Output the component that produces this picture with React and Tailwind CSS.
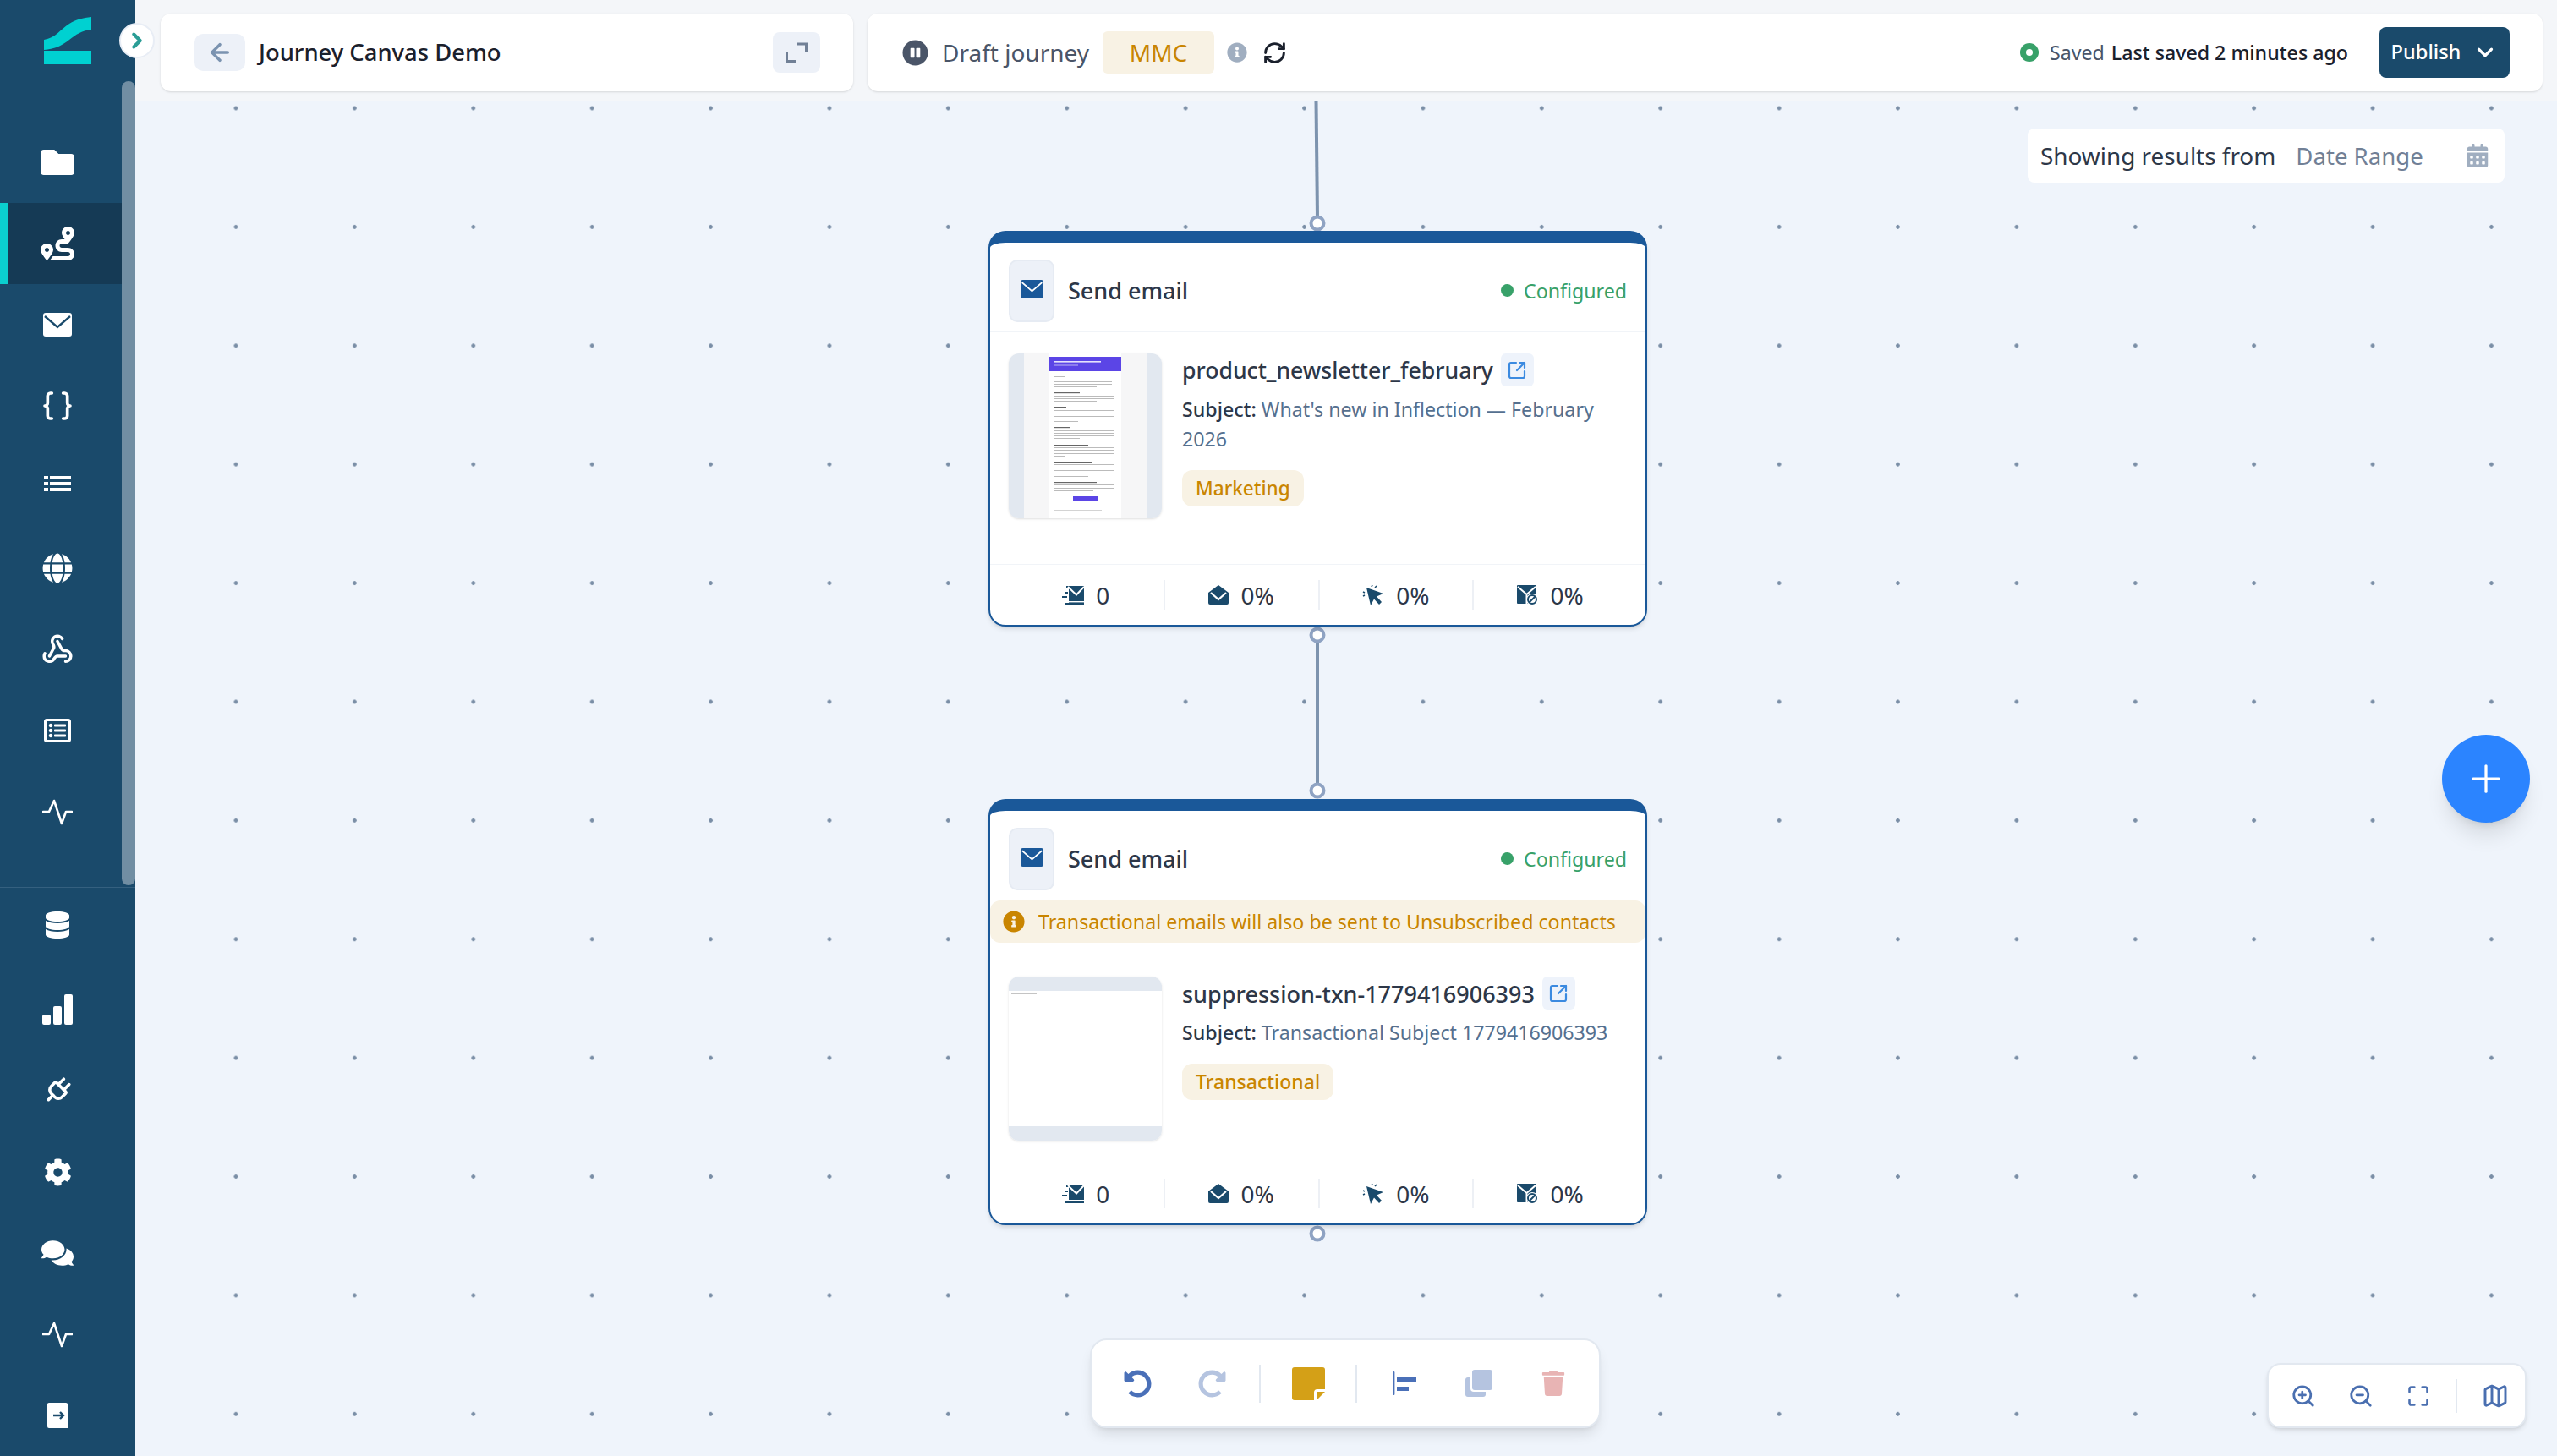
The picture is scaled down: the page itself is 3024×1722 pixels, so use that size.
import {
  ArrowLeft,
  Braces,
  ChevronDown,
  ChevronRight,
  Map as MapIcon,
  Maximize,
  Plug,
  Plus,
  RefreshCw,
  SquareArrowOutUpRight,
  Webhook,
  ZoomIn,
  ZoomOut,
} from 'lucide-react';
import {
  FaCalendarAlt,
  FaCog,
  FaComments,
  FaDatabase,
  FaFolder,
  FaGlobe,
  FaInfoCircle,
  FaPauseCircle,
  FaRedoAlt,
  FaRegListAlt,
  FaRoute,
  FaTrash,
  FaUndoAlt,
} from 'react-icons/fa';

// ─── Small drawn icons ───────────────────────────────────────────────────────

function Logo() {
  return (
    <svg width="56" height="56" viewBox="0 0 56 56" fill="#00d1d1">
      <path d="M0 27C14 25 20 14 30 8C38 3 46 1 56 0V15C44 16 38 21 30 27C20 35 12 38 0 39Z" />
      <rect x="0" y="40" width="56" height="16" />
    </svg>
  );
}

function Envelope({ color, width = 34, height = 28 }) {
  return (
    <svg width={width} height={height} viewBox="0 0 34 28">
      <rect width="34" height="28" rx="3" fill={color} />
      <path d="M2 4L17 17L32 4" fill="none" stroke={color === '#ffffff' ? '#1a4a6b' : '#ffffff'} strokeWidth="2.4" />
    </svg>
  );
}

function ListIcon() {
  return (
    <svg width="32" height="18" viewBox="0 0 32 18" fill="#ffffff" className="-translate-y-1">
      <rect x="0" y="0" width="5" height="4" />
      <rect x="7" y="0" width="25" height="4" />
      <rect x="0" y="7" width="5" height="4" />
      <rect x="7" y="7" width="25" height="4" />
      <rect x="0" y="14" width="5" height="4" />
      <rect x="7" y="14" width="25" height="4" />
    </svg>
  );
}

function Pulse() {
  return (
    <svg width="36" height="33" viewBox="0 0 36 33" fill="none" stroke="#ffffff" strokeWidth="2.6" strokeLinecap="round" strokeLinejoin="round">
      <path d="M1 16H8L14 3L23 30L28 16H35" />
    </svg>
  );
}

function Bars() {
  return (
    <svg width="36" height="36" viewBox="0 0 36 36" fill="#ffffff">
      <rect x="0" y="24" width="10" height="12" rx="2" />
      <rect x="13" y="14" width="10" height="22" rx="2" />
      <rect x="26" y="0" width="10" height="36" rx="2" />
    </svg>
  );
}

function ExitBox() {
  return (
    <svg width="24" height="30" viewBox="0 0 24 30">
      <path d="M2 0H22a2 2 0 012 2V30H2a2 2 0 01-2-2V2a2 2 0 012-2z" fill="#ffffff" />
      <path d="M7 15H19M15 11L19 15L15 19" fill="none" stroke="#1a4a6b" strokeWidth="2.4" />
    </svg>
  );
}

function SentIcon() {
  return (
    <svg width="26" height="22" viewBox="0 0 26 22">
      <path d="M5 0H26V22H3V20H8V3H5Z" fill="#1a4a6b" />
      <path d="M7 1L17 10.5L26 1" fill="none" stroke="#ffffff" strokeWidth="2" />
      <path d="M3 8H7M0 13H6" stroke="#1a4a6b" strokeWidth="2" />
      <rect x="8" y="18" width="18" height="1.4" fill="#ffffff" />
    </svg>
  );
}

function OpenIcon() {
  return (
    <svg width="24" height="23" viewBox="0 0 24 23">
      <path d="M0 9L12 0L24 9V21a2 2 0 01-2 2H2a2 2 0 01-2-2Z" fill="#1a4a6b" />
      <path d="M3 9L12 17L21 9" fill="none" stroke="#ffffff" strokeWidth="2.2" />
    </svg>
  );
}

function ClickIcon() {
  return (
    <svg width="26" height="24" viewBox="0 0 26 24">
      <path d="M5 3L25 10L17 13.5L23 20L20 23L14 16.5L10 24Z" fill="#1a4a6b" />
      <path d="M11 2L12 0M15 3L17 1M1 8L3 9M1 13L3 12" stroke="#1a4a6b" strokeWidth="1.6" />
    </svg>
  );
}

function UnsubIcon() {
  return (
    <svg width="25" height="24" viewBox="0 0 25 24">
      <rect width="23" height="22" rx="1" fill="#1a4a6b" />
      <path d="M1 2L11.5 11L22 2M11.5 11V22" fill="none" stroke="#ffffff" strokeWidth="2" />
      <circle cx="18" cy="17" r="7" fill="#ffffff" />
      <circle cx="18" cy="17" r="5" fill="none" stroke="#1a4a6b" strokeWidth="2" />
      <path d="M14.5 20.5L21.5 13.5" stroke="#1a4a6b" strokeWidth="2" />
    </svg>
  );
}

function StickyIcon() {
  return (
    <svg width="39" height="39" viewBox="0 0 39 39" fill="#d4a017">
      <path d="M3 0H36a3 3 0 013 3V26H30a4 4 0 00-4 4V39H3a3 3 0 01-3-3V3a3 3 0 013-3z" />
      <path d="M29 29H39L29 39Z" />
    </svg>
  );
}

function AlignIcon() {
  return (
    <svg width="28" height="28" viewBox="0 0 28 28" fill="#4a70b8">
      <rect x="0" y="0" width="2.4" height="28" rx="1" />
      <rect x="5" y="7" width="23" height="5" />
      <rect x="5" y="18" width="14" height="5" />
    </svg>
  );
}

function CopyIcon() {
  return (
    <svg width="32" height="32" viewBox="0 0 32 32" fill="#b5c4e0">
      <rect x="0" y="9" width="24" height="23" rx="3" />
      <rect x="6" y="-2" width="28" height="28" rx="4" fill="#ffffff" />
      <rect x="8" y="0" width="24" height="24" rx="3" />
    </svg>
  );
}

function ExpandIcon() {
  return (
    <svg width="26" height="24" viewBox="0 0 26 24" fill="none" stroke="#718096" strokeWidth="3">
      <path d="M14 2H24.5V12M1.5 12V22.5H12" />
    </svg>
  );
}

// ─── Email thumbnail (drawn preview of the template) ─────────────────────────

const THUMB_LINES = [
  [27, 12], [33, 68], [36, 68], [39, 50],
  [46, 30, true], [50, 70], [53, 70], [56, 50],
  [63, 14, true], [67, 70], [70, 70], [74, 70], [77, 70], [80, 28],
  [87, 18, true], [91, 70], [94, 70], [97, 70], [100, 30],
  [108, 40, true], [111, 70], [114, 70], [118, 70], [121, 12],
  [128, 44, true], [131, 70], [135, 70], [138, 70], [141, 70], [145, 40],
  [152, 50, true], [155, 70], [159, 70], [162, 46],
];

function NewsletterThumb() {
  return (
    <svg width="181" height="195" viewBox="0 0 181 195" className="block">
      <rect width="181" height="195" fill="#e2e8f0" />
      <rect x="18" width="146" height="195" fill="#f6f6f7" />
      <rect x="48" y="0" width="85" height="195" fill="#ffffff" />
      <rect x="48" y="4" width="85" height="17" fill="#5b45e6" />
      <rect x="54" y="9" width="55" height="1.6" fill="#ffffff" opacity="0.85" />
      <rect x="54" y="13.5" width="28" height="1" fill="#ffffff" opacity="0.6" />
      {THUMB_LINES.map(([y, w, bold], i) => (
        <rect key={i} x="54" y={y} width={w} height={bold ? 1.2 : 0.9} fill={bold ? '#666666' : '#b4b4b4'} />
      ))}
      <rect x="76" y="169" width="29" height="6" fill="#5b45e6" />
      <rect x="54" y="185" width="56" height="0.8" fill="#c8c8c8" />
    </svg>
  );
}

function BlankThumb() {
  return (
    <div className="flex h-[194px] w-[181px] flex-col bg-white">
      <div className="h-[17px] bg-[#e2e8f0]" />
      <div className="flex-1 pl-[3px] pt-[2px]">
        <div className="h-[2px] w-[30px] bg-[#c4c4c4]" />
      </div>
      <div className="h-[17px] bg-[#e2e8f0]" />
    </div>
  );
}

// ─── Sidebar ─────────────────────────────────────────────────────────────────

const NAV_TOP = [
  { key: 'folder', icon: <FaFolder size={40} color="#ffffff" /> },
  { key: 'journey', icon: <FaRoute size={40} color="#ffffff" />, active: true },
  { key: 'mail', icon: <Envelope color="#ffffff" /> },
  { key: 'code', icon: <Braces size={40} color="#ffffff" strokeWidth={2.2} /> },
  { key: 'list', icon: <ListIcon /> },
  { key: 'globe', icon: <FaGlobe size={36} color="#ffffff" /> },
  { key: 'webhook', icon: <Webhook size={38} color="#ffffff" strokeWidth={2.2} /> },
  { key: 'table', icon: <FaRegListAlt size={32} color="#ffffff" /> },
  { key: 'pulse', icon: <Pulse /> },
];

const NAV_BOTTOM = [
  { key: 'data', icon: <FaDatabase size={32} color="#ffffff" className="-translate-y-1" /> },
  { key: 'bars', icon: <Bars /> },
  { key: 'plug', icon: <Plug size={36} color="#ffffff" strokeWidth={2.4} className="rotate-45" /> },
  { key: 'gear', icon: <FaCog size={33} color="#ffffff" /> },
  { key: 'chat', icon: <FaComments size={38} color="#ffffff" /> },
  { key: 'pulse2', icon: <Pulse /> },
  { key: 'exit', icon: <ExitBox /> },
];

function NavRow({ icon, active }) {
  return (
    <div className={`relative flex h-24 w-40 items-center pl-[48px] ${active ? 'bg-[#153a55]' : ''}`}>
      {active && <div className="absolute bottom-0 left-0 top-0 w-[10px] bg-[#0bcfcf]" />}
      <div className="flex w-10 justify-center">{icon}</div>
    </div>
  );
}

function Sidebar() {
  return (
    <aside className="relative flex h-full w-40 shrink-0 flex-col bg-[#1a4a6b]">
      <div className="h-36 pl-[52px] pt-5">
        <Logo />
      </div>
      <nav className="h-[905px]">
        {NAV_TOP.map((n) => (
          <NavRow key={n.key} icon={n.icon} active={n.active} />
        ))}
      </nav>
      <div className="h-px bg-[#35607f]" />
      {NAV_BOTTOM.map((n) => (
        <NavRow key={n.key} icon={n.icon} />
      ))}

      {/* Scrollbar thumb */}
      <div className="absolute left-[144px] top-[96px] h-[951px] w-4 rounded-t-lg rounded-b-lg bg-[#718ea3]" />

      {/* Collapse toggle */}
      <button
        type="button"
        className="absolute left-[141px] top-[27px] z-20 flex h-[42px] w-[42px] items-center justify-center rounded-full border-2 border-[#e8edf5] bg-white"
      >
        <ChevronRight size={30} color="#2a9d96" strokeWidth={3.2} />
      </button>
    </aside>
  );
}

// ─── Top bar ─────────────────────────────────────────────────────────────────

function TopBar() {
  return (
    <header className="flex h-[120px] shrink-0 gap-[17px] bg-[#f4f6f9] pb-3 pl-[30px] pr-[17px] pt-4">
      <div className="flex w-[819px] items-center rounded-xl bg-white pl-10 pr-[39px] shadow-sm">
        <button type="button" className="flex h-11 w-[60px] items-center justify-center rounded-[10px] bg-[#edf1f8]">
          <ArrowLeft size={32} color="#7b93b0" strokeWidth={2.6} />
        </button>
        <h1 className="ml-4 flex-1 text-[27.4px] font-medium text-[#1a202c]">Journey Canvas Demo</h1>
        <button type="button" className="flex h-12 w-14 items-center justify-center rounded-lg bg-[#edf1f8]">
          <ExpandIcon />
        </button>
      </div>

      <div className="flex flex-1 items-center rounded-xl bg-white pl-[41px] pr-[39px] shadow-sm">
        <FaPauseCircle size={31} color="#4a5568" />
        <span className="ml-4 text-[28px] text-[#4a5568]">Draft journey</span>
        <span className="ml-4 flex h-[50px] w-[132px] items-center justify-center rounded-md bg-[#f8f2e4] text-[28px] text-[#c98500]">
          MMC
        </span>
        <FaInfoCircle size={24} color="#a0aec0" className="ml-[15px]" />
        <RefreshCw size={29} color="#1a202c" strokeWidth={2.4} className="ml-[18px]" />
        <div className="ml-auto flex items-center">
          <span className="flex h-[22px] w-[22px] items-center justify-center rounded-full bg-[#38a169]">
            <span className="h-2 w-2 rounded-full bg-white" />
          </span>
          <span className="ml-[13px] text-[23.2px] text-[#4a5568]">Saved</span>
          <span className="ml-2 text-[23.2px] font-medium text-[#1a202c]">Last saved 2 minutes ago</span>
        </div>
        <button
          type="button"
          className="ml-[37px] flex h-[60px] w-[154px] items-center justify-center gap-[14px] rounded-lg bg-[#1a4a6b] text-[23.6px] font-medium text-white"
        >
          Publish
          <ChevronDown size={30} color="#ffffff" strokeWidth={2.6} />
        </button>
      </div>
    </header>
  );
}

// ─── Email node ──────────────────────────────────────────────────────────────

function Stat({ icon, value }) {
  return (
    <div className="flex h-[35px] items-center justify-center gap-[14px] border-[#edf0f5] [&:not(:first-child)]:border-l-2">
      {icon}
      <span className="text-[28px] leading-none text-[#2d3748]">{value}</span>
    </div>
  );
}

function EmailNode({ position, warning, thumb, name, nameClass, subject, badge, badgeClass, bodyClass }) {
  return (
    <div className={`absolute w-[779px] rounded-[20px] border-2 border-t-[14px] border-[#1a5899] bg-white shadow-md ${position}`}>
      <div className="flex h-[106px] items-center border-b border-[#f1f4f8] px-[22px] pt-2">
        <div className="flex h-[74px] w-[54px] items-center justify-center rounded-[10px] border-2 border-[#e6ebf3] bg-[#edf1f8] pb-[3px]">
          <Envelope color="#1a5899" width={27} height={22} />
        </div>
        <span className="ml-4 flex-1 pt-[2px] text-[27px] font-medium text-[#2d3748]">Send email</span>
        <span className="h-[15px] w-[15px] rounded-full bg-[#38a169]" />
        <span className="ml-3 pt-px text-[23.2px] text-[#38a169]">Configured</span>
      </div>

      {warning && (
        <div className="flex h-[50px] items-center rounded-xl bg-[#f8f2e4] pl-[15px] text-[23.2px] text-[#c98500]">
          <FaInfoCircle size={26} color="#c98500" />
          <span className="ml-4">{warning}</span>
        </div>
      )}

      <div className={`flex px-[22px] ${bodyClass}`}>
        <div className="shrink-0 self-start overflow-hidden rounded-xl shadow-sm">{thumb}</div>
        <div className="ml-6 min-w-0 flex-1">
          <div className="flex h-[39px] items-center">
            <span className={`pt-[3px] font-medium text-[#2d3748] ${nameClass}`}>{name}</span>
            <span className="ml-[9px] flex h-[39px] w-[39px] items-center justify-center rounded-md bg-[#eef3fb]">
              <SquareArrowOutUpRight size={24} color="#3b8ae0" strokeWidth={2.2} />
            </span>
          </div>
          <p className="mt-[10px] text-[23.2px] leading-[35px] text-[#55708f]">
            <span className="font-medium text-[#2d3748]">Subject:</span> {subject}
          </p>
          <span className={`mt-[19px] inline-block rounded-xl bg-[#f8f2e4] px-4 py-[5px] font-medium leading-[33px] text-[#c98500] ${badgeClass}`}>
            {badge}
          </span>
        </div>
      </div>

      <div className="grid h-[72px] grid-cols-4 items-center border-t border-[#f1f4f8] px-[22px]">
        <Stat icon={<SentIcon />} value="0" />
        <Stat icon={<OpenIcon />} value="0%" />
        <Stat icon={<ClickIcon />} value="0%" />
        <Stat icon={<UnsubIcon />} value="0%" />
      </div>
    </div>
  );
}

// ─── Canvas overlays ─────────────────────────────────────────────────────────

function Edges() {
  return (
    <svg className="absolute inset-0" width="2864" height="1602" fill="#ffffff" stroke="#8fa3c3" strokeWidth="4">
      <path d="M1396.5 0L1398 136" stroke="#7d93ae" fill="none" />
      <path d="M1398 640V806" stroke="#7d93ae" fill="none" />
      <circle cx="1398" cy="144" r="7.5" />
      <circle cx="1398" cy="631" r="7.5" />
      <circle cx="1398" cy="815" r="7.5" />
      <circle cx="1398" cy="1339" r="7.5" />
    </svg>
  );
}

function Toolbar() {
  return (
    <div className="absolute left-[1129px] top-[1463px] flex h-[106px] items-center gap-6 rounded-[20px] border-2 border-[#e2e8f0] bg-white px-[22px] shadow-lg">
      <span className="flex w-16 justify-center"><FaUndoAlt size={33} color="#4a70b8" /></span>
      <span className="flex w-16 justify-center"><FaRedoAlt size={33} color="#b5c4e0" /></span>
      <span className="h-[45px] w-0.5 bg-[#e2e8f0]" />
      <span className="flex w-16 justify-center"><StickyIcon /></span>
      <span className="h-[45px] w-0.5 bg-[#e2e8f0]" />
      <span className="flex w-16 justify-center"><AlignIcon /></span>
      <span className="flex w-16 justify-center"><CopyIcon /></span>
      <span className="flex w-16 justify-center"><FaTrash size={30} color="#e8b4b4" /></span>
    </div>
  );
}

function ZoomControls() {
  return (
    <div className="absolute left-[2521px] top-[1492px] flex h-[77px] w-[307px] items-center rounded-2xl border-2 border-[#e2e8f0] bg-white pl-[7px] shadow-md">
      <span className="flex w-[68px] justify-center"><ZoomIn size={30} color="#4a6fb0" strokeWidth={2.2} /></span>
      <span className="flex w-[68px] justify-center"><ZoomOut size={30} color="#4a6fb0" strokeWidth={2.2} /></span>
      <span className="flex w-[68px] justify-center"><Maximize size={28} color="#4a6fb0" strokeWidth={2.2} /></span>
      <span className="ml-[10px] h-10 w-0.5 bg-[#e2e8f0]" />
      <span className="ml-[29px]"><MapIcon size={32} color="#4a6fb0" strokeWidth={2.2} /></span>
    </div>
  );
}

// ─── Page ────────────────────────────────────────────────────────────────────

export default function App() {
  return (
    <div className="flex h-[1722px] w-[3024px] overflow-hidden font-['Noto_Sans',sans-serif]">
      <Sidebar />
      <main className="flex min-w-0 flex-1 flex-col">
        <TopBar />
        <div className="relative flex-1 bg-[#eff4fb] bg-[radial-gradient(circle,#7a8ea6_2px,transparent_2.6px)] bg-[size:140.4px_140.4px] bg-[position:48.8px_-62.2px]">
          <Edges />

          <EmailNode
            position="left-[1009px] top-[153px]"
            thumb={<NewsletterThumb />}
            name="product_newsletter_february"
            nameClass="text-[26.6px]"
            subject="What's new in Inflection — February 2026"
            badge="Marketing"
            badgeClass="text-[22.6px]"
            bodyClass="h-[274px] pt-[25px]"
          />

          <EmailNode
            position="left-[1009px] top-[825px]"
            warning="Transactional emails will also be sent to Unsubscribed contacts"
            thumb={<BlankThumb />}
            name="suppression-txn-1779416906393"
            nameClass="text-[27px]"
            subject="Transactional Subject 1779416906393"
            badge="Transactional"
            badgeClass="text-[23px]"
            bodyClass="h-[260px] pt-10"
          />

          {/* Date range */}
          <div className="absolute left-[2238px] top-8 flex h-16 w-[564px] items-center rounded-lg bg-white pl-[15px] pr-[18px]">
            <span className="pt-[2px] text-[27.9px] text-[#2d3748]">Showing results from</span>
            <span className="ml-6 flex-1 pt-[2px] text-[27.6px] text-[#718096]">Date Range</span>
            <FaCalendarAlt size={28} color="#a0aec0" />
          </div>

          {/* Add node */}
          <button
            type="button"
            className="absolute left-[2728px] top-[749px] flex h-[104px] w-[104px] items-center justify-center rounded-full bg-[#2b84ff] shadow-xl"
          >
            <Plus size={52} color="#ffffff" strokeWidth={1.5} />
          </button>

          <Toolbar />
          <ZoomControls />
        </div>
      </main>
    </div>
  );
}
